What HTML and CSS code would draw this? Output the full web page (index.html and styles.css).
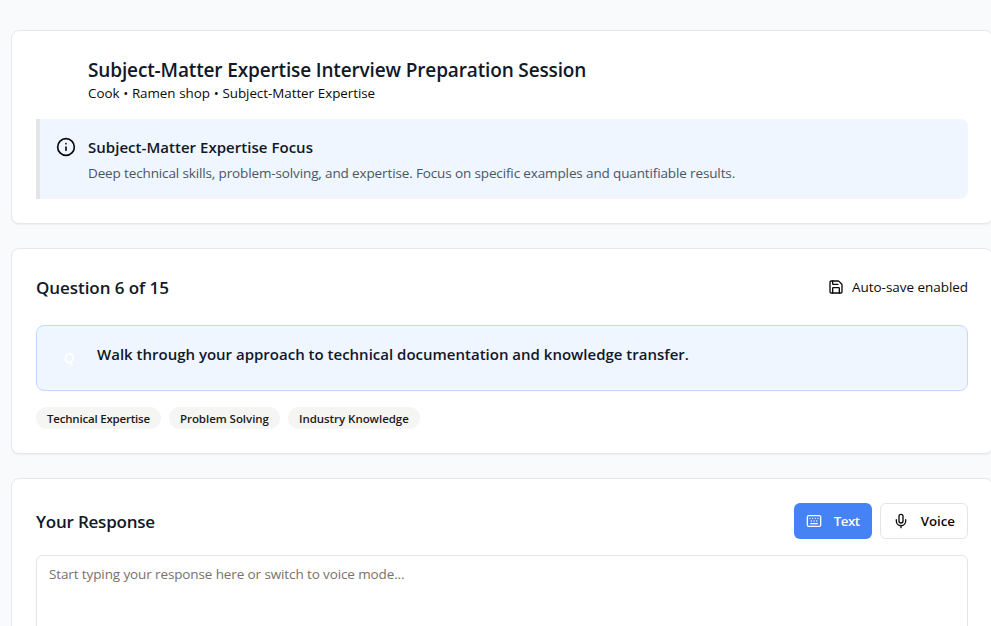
FILE: index.html
```html
<!DOCTYPE html>
<html lang="en">
<head>
<meta charset="utf-8">
<title>Interview Preparation Session</title>
<link rel="stylesheet" href="styles.css">
</head>
<body>
<main class="page">
  <section class="card">
    <header class="session">
      <h1 class="session-title">Subject-Matter Expertise Interview Preparation Session</h1>
      <p class="session-meta">Cook • Ramen shop • Subject-Matter Expertise</p>
    </header>
    <div class="focus">
      <svg class="icon-info" viewBox="0 0 24 24"><circle cx="12" cy="12" r="10"/><path d="M12 16v-4M12 8h.01"/></svg>
      <div>
        <h2 class="focus-title">Subject-Matter Expertise Focus</h2>
        <p class="focus-text">Deep technical skills, problem-solving, and expertise. Focus on specific examples and quantifiable results.</p>
      </div>
    </div>
  </section>

  <section class="card">
    <header class="question-head">
      <h2 class="heading">Question 6 of 15</h2>
      <div class="autosave">
        <svg class="icon" viewBox="0 0 24 24"><path d="M15.2 3a2 2 0 0 1 1.4.6l3.8 3.8a2 2 0 0 1 .6 1.4V19a2 2 0 0 1-2 2H5a2 2 0 0 1-2-2V5a2 2 0 0 1 2-2z"/><path d="M17 21v-7a1 1 0 0 0-1-1H8a1 1 0 0 0-1 1v7M7 3v4a1 1 0 0 0 1 1h7"/></svg>
        <span>Auto-save enabled</span>
      </div>
    </header>
    <div class="question">
      <span class="question-mark">Q</span>
      <p class="question-text">Walk through your approach to technical documentation and knowledge transfer.</p>
    </div>
    <div class="tags">
      <span class="tag tag-tight">Technical Expertise</span>
      <span class="tag">Problem Solving</span>
      <span class="tag">Industry Knowledge</span>
    </div>
  </section>

  <section class="card">
    <header class="response-head">
      <h2 class="heading heading-tight">Your Response</h2>
      <div class="modes">
        <button class="mode mode-active"><svg class="icon" viewBox="0 0 24 24"><rect width="20" height="16" x="2" y="4" rx="2"/><path d="M10 8h.01M12 12h.01M14 8h.01M16 12h.01M18 8h.01M6 8h.01M7 16h10M8 12h.01"/></svg><span>Text</span></button>
        <button class="mode"><svg class="icon" viewBox="0 0 24 24"><path d="M12 2a3 3 0 0 0-3 3v7a3 3 0 0 0 6 0V5a3 3 0 0 0-3-3Z"/><path d="M19 10v2a7 7 0 0 1-14 0v-2M12 19v3"/></svg><span>Voice</span></button>
      </div>
    </header>
    <textarea class="answer" placeholder="Start typing your response here or switch to voice mode..."></textarea>
  </section>
</main>
</body>
</html>
```
FILE: styles.css
```css
* { box-sizing: border-box; margin: 0; padding: 0; }

body {
  height: 626px;
  overflow: hidden;
  background: #f9fafb;
  background: #f8fafc;
  color: #0c0a09;
  font-family: "Open Sans", "Noto Sans", sans-serif;
  font-size: 13.5px;
  line-height: 20px;
}

.page {
  width: 982px;
  height: 596px;
  overflow: hidden;
  margin: 30px 0 0 11px;
  display: flex;
  flex-direction: column;
  gap: 24px;
}

.card {
  flex: none;
  background: #fff;
  border: 1px solid #e5e7eb;
  border-radius: 8px;
  padding: 24px;
  box-shadow: 0 1px 2px rgba(0, 0, 0, 0.05);
}

h1, h2, p, span { white-space: nowrap; }

svg {
  flex: none;
  fill: none;
  stroke: currentColor;
  stroke-width: 2;
  stroke-linecap: round;
  stroke-linejoin: round;
}

.icon { width: 16px; height: 16px; }
.icon-info { width: 20px; height: 20px; margin-top: 2px; }

.session { padding: 1px 0 0 52px; margin-bottom: 16px; }
.session-title { font-size: 19px; line-height: 28px; font-weight: 600; letter-spacing: -0.14px; color: #111827; }
.session-meta { margin-top: -1px; letter-spacing: -0.04px; word-spacing: 0.3px; font-size: 13.4px; }

.focus {
  display: flex;
  gap: 12px;
  padding: 16px;
  background: #eff6ff;
  border-left: 4px solid #e5e5e5;
  border-radius: 0 8px 8px 0;
}
.focus-title { font-size: 15px; line-height: 24px; font-weight: 600; letter-spacing: 0.033px; color: #111827; margin-bottom: 4px; }
.focus-text { color: #4b5563; letter-spacing: -0.131px; }

.heading { padding-top: 1px; font-size: 17px; line-height: 27px; font-weight: 600; letter-spacing: -0.06px; color: #111827; }
.heading-tight { letter-spacing: -0.22px; }

.question-head, .response-head { display: flex; justify-content: space-between; align-items: center; }
.question-head { margin-bottom: 24px; }
.autosave { display: flex; align-items: center; gap: 8px; letter-spacing: -0.043px; }

.question {
  display: flex;
  gap: 12px;
  padding: 16px;
  background: #eff6ff;
  border: 1px solid #bfdbfe;
  border-radius: 8px;
}
.question-mark { width: 32px; line-height: 32px; text-align: center; color: #fff; font-weight: 600; }
.question-text { font-size: 15px; line-height: 24px; font-weight: 600; color: #111827; }

.tags { display: flex; gap: 8px; margin-top: 16px; }
.tag {
  padding: 4px 11px 2px;
  border-radius: 11px;
  background: #f5f5f4;
  color: #1c1917;
  font-size: 11.5px;
  line-height: 16px;
  font-weight: 600;
  letter-spacing: -0.04px;
}
.tag-tight { letter-spacing: -0.2px; }

.response-head { margin-bottom: 16px; }
.modes { display: flex; gap: 8px; }
.mode {
  display: flex;
  align-items: center;
  gap: 12px;
  height: 36px;
  padding: 0 12px;
  border: 1px solid #e5e5e5;
  border-radius: 6px;
  background: #fff;
  color: #0c0a09;
  font: 600 13.3px/20px "Open Sans", "Noto Sans", sans-serif;
}
.mode-active { background: #4582f6; border: 0; color: #fafaf9; letter-spacing: -0.45px; }

.answer {
  display: block;
  width: 100%;
  height: 200px;
  padding: 8px 12px;
  border: 1px solid #e5e5e5;
  border-radius: 6px;
  background: #fff;
  resize: none;
  font: inherit;
  letter-spacing: -0.115px;
}
.answer::placeholder { color: #78716c; }
```
